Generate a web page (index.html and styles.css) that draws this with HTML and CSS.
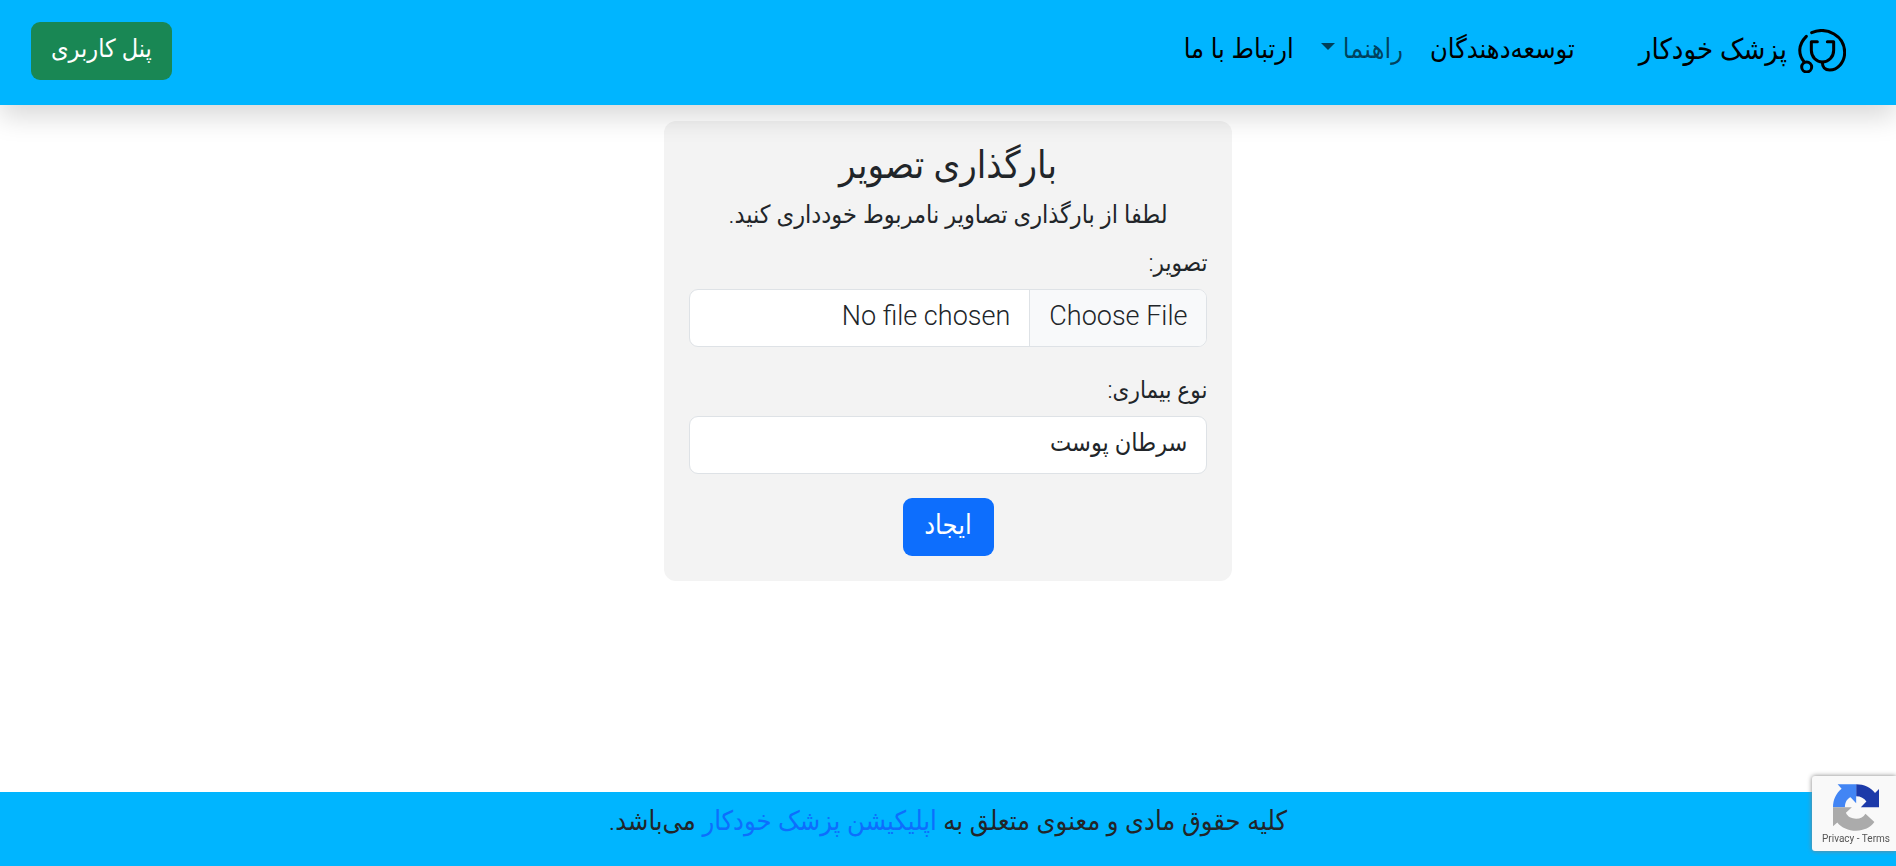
FILE: index.html
```html
<!DOCTYPE html>
<html lang="fa" dir="rtl">
<head>
<meta charset="utf-8">
<meta name="viewport" content="width=device-width, initial-scale=1">
<title>پزشک خودکار</title>
<link rel="stylesheet" href="styles.css">
</head>
<body>
<header class="navbar">
  <a class="brand" href="#">
    <svg class="brand-logo" viewBox="0 0 144 132" fill="none" stroke="#000" stroke-width="9" stroke-linecap="round" aria-hidden="true">
      <path d="M41 11C88-9 140 22 140 70C140 100 119 123 95 123C81 123 73 114 73 100"/>
      <path d="M25 22C-1 48 1 77 18 98"/>
      <circle cx="26" cy="114" r="15"/>
      <path d="M58 38H40V64C40 85 56 99 73 99C91 99 107 85 107 64V38H88" stroke-linejoin="round"/>
    </svg>
    <span class="brand-name">پزشک خودکار</span>
  </a>
  <nav class="nav">
    <a class="nav-link" href="#">توسعه‌دهندگان</a>
    <button class="nav-link nav-toggle" type="button">راهنما</button>
    <a class="nav-link" href="#">ارتباط با ما</a>
  </nav>
  <a class="btn btn-success" href="#">پنل کاربری</a>
</header>
<main class="content">
  <form class="card">
    <h1 class="card-title">بارگذاری تصویر</h1>
    <p class="card-note">لطفا از بارگذاری تصاویر نامربوط خودداری کنید.</p>
    <label class="label" for="image">تصویر:</label>
    <input class="control control-file" id="image" type="file">
    <label class="label" for="disease">نوع بیماری:</label>
    <select class="control" id="disease"><option>سرطان پوست</option></select>
    <button class="btn btn-primary" type="button">ایجاد</button>
  </form>
</main>
<footer class="footer">
  <p class="footer-text">کلیه حقوق مادی و معنوی متعلق به <a class="footer-link" href="#">اپلیکیشن پزشک خودکار</a> می‌باشد.</p>
</footer>
<aside class="captcha" dir="ltr">
  <svg class="captcha-logo" viewBox="0 0 139 140" aria-hidden="true">
    <path fill="#1c3aa9" d="M70 0C94 0 114 10 127 26L139 14V69H84L101 52C94 42 84 36 70 36Z"/>
    <path fill="#4285f4" d="M70 0H14L26 13C9 27 0 46 0 69H36C36 54 43 43 53 39L70 57Z"/>
    <path fill="#ababab" d="M0 69V127L13 115C26 131 46 140 70 140C93 140 113 131 125 114L98 89C92 99 83 104 70 104C56 104 44 98 39 86L57 69Z"/>
  </svg>
  <div class="captcha-links"><a href="#">Privacy</a> - <a href="#">Terms</a></div>
</aside>
</body>
</html>
```
FILE: styles.css
```css
* { box-sizing: border-box; }

body {
  margin: 0;
  min-height: 100vh;
  display: flex;
  flex-direction: column;
  background: #fff;
  color: #212529;
  font-family: Roboto, "DejaVu Sans Condensed", "DejaVu Sans", sans-serif;
  font-size: 25px;
  font-weight: 300;
  line-height: 38px;
}

a { color: inherit; text-decoration: none; }

.navbar {
  position: relative;
  z-index: 1;
  display: flex;
  align-items: center;
  padding: 22px 50px 25px 31px;
  background: #00b5ff;
  box-shadow: 0 12px 25px rgba(0, 0, 0, .15);
}

.brand {
  display: flex;
  align-items: center;
  gap: 11px;
  color: #000;
}
.brand-logo { width: 48px; height: 44px; }
.brand-name {
  padding-bottom: 4px;
  font-size: 29px;
}

.nav {
  display: flex;
  flex: 1;
  gap: 27px;
  margin-inline-start: 64px;
  padding-bottom: 4px;
  font-size: 27px;
}
.nav-link {
  padding: 0;
  border: 0;
  background: none;
  color: #000;
  font: inherit;
}
.nav-toggle {
  display: flex;
  gap: 8px;
  color: rgba(0, 0, 0, .65);
}
.nav-toggle::after {
  content: "";
  align-self: flex-start;
  margin-top: 13px;
  border: 7px solid transparent;
  border-top-color: currentColor;
  border-bottom: 0;
}

.btn {
  padding: 8px 20px 12px;
  border: 0;
  border-radius: 9px;
  color: #fff;
  font: inherit;
}
.btn-success { background: #198754; }
.btn-primary {
  align-self: center;
  min-width: 91px;
  background: #0d6efd;
  font-size: 27px;
}

.content {
  flex: 1;
  padding: 16px 0;
}
.card {
  display: flex;
  flex-direction: column;
  width: 30%;
  min-width: 320px;
  margin: 0 auto;
  padding: 25px;
  border-radius: 12px;
  background: #f3f3f3;
}
.card-title {
  margin: 0 0 12px;
  font-size: 38px;
  font-weight: 300;
  line-height: 38px;
  text-align: center;
}
.card-note { margin: 0 0 10px; text-align: center; }
.label {
  margin-bottom: 7px;
  font-size: 24px;
}
.control {
  width: 100%;
  height: 58px;
  margin-bottom: 24px;
  padding: 7px 19px 11px;
  appearance: none;
  border: 1px solid #dee2e6;
  border-radius: 9px;
  background: #fff;
  color: #212529;
  font: inherit;
  overflow: hidden;
}
.control-file { font-size: 27px; }
.control-file::file-selector-button {
  margin: -7px -19px -11px;
  margin-inline-end: 19px;
  padding: 7px 19px 11px;
  border: 0 solid #dee2e6;
  border-inline-end-width: 1px;
  background: #f8f9fa;
  color: inherit;
  font: inherit;
}

.footer {
  padding: 10px 16px 26px;
  background: #00b5ff;
  font-size: 27px;
  text-align: center;
}
.footer-text { margin: 0; }
.footer-link { color: #0d6efd; }

.captcha {
  position: fixed;
  right: 0;
  bottom: 15px;
  z-index: 2;
  display: flex;
  flex-direction: column;
  align-items: center;
  width: 84px;
  padding: 8px 0 4px 4px;
  border-radius: 3px 0 0 3px;
  background: #f9f9f9;
  box-shadow: 0 0 5px gray;
}
.captcha-logo { width: 46px; height: 47px; }
.captcha-links {
  color: #555;
  font: 10px/16px Roboto, sans-serif;
  white-space: nowrap;
}
```
